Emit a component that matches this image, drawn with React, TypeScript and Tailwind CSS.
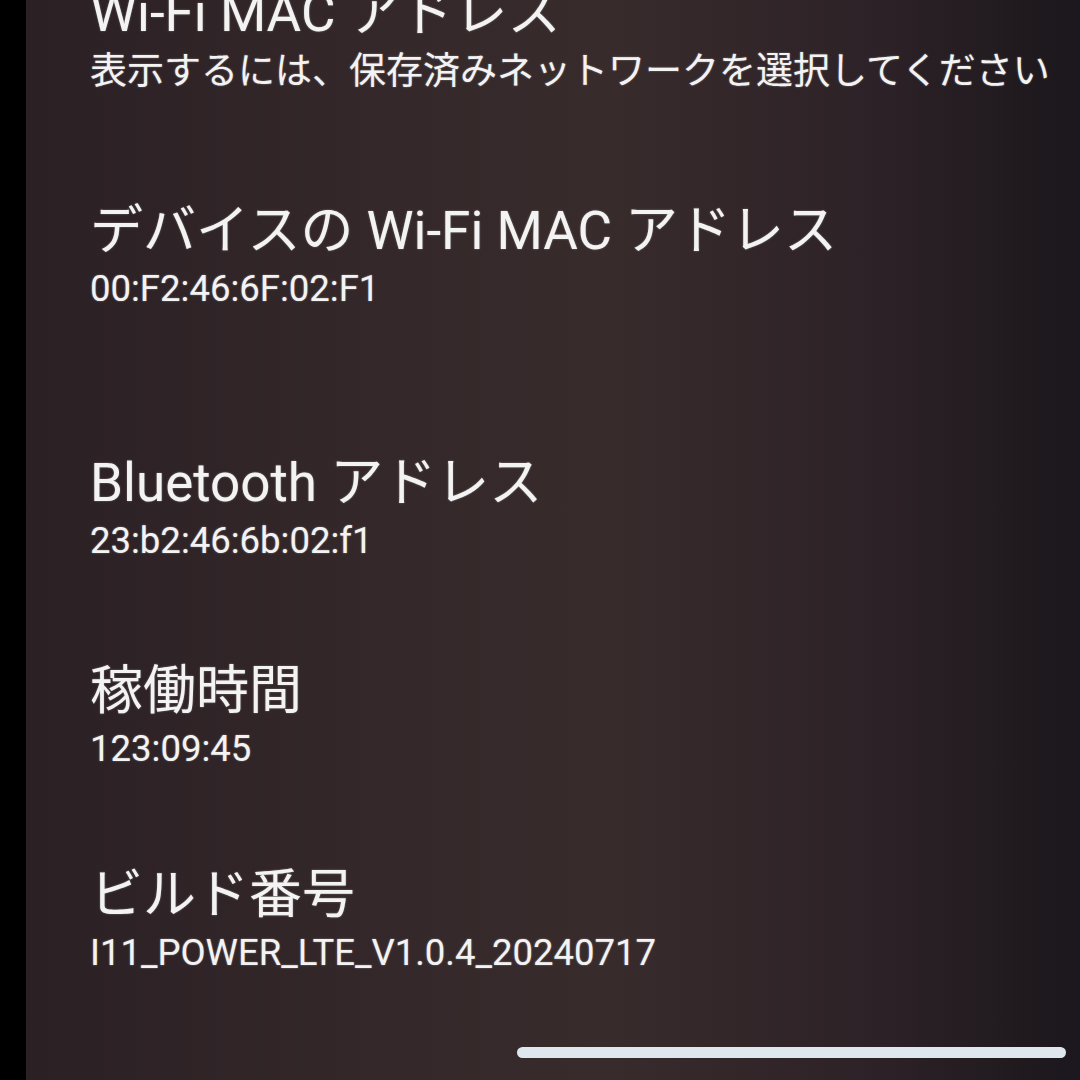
const items = [
  { title: "Wi-Fi MAC アドレス", value: "表示するには、保存済みネットワークを選択してください", top: "mt-[-18px]", cjkValue: true },
  { title: "デバイスの Wi-Fi MAC アドレス", value: "00:F2:46:6F:02:F1", top: "mt-[106px]" },
  { title: "Bluetooth アドレス", value: "23:b2:46:6b:02:f1", top: "mt-[141px]" },
  { title: "稼働時間", value: "123:09:45", top: "mt-[97px]" },
  { title: "ビルド番号", value: "I11_POWER_LTE_V1.0.4_20240717", top: "mt-[93px]" },
];

function InfoRow({
  title,
  value,
  top,
  cjkValue,
}: {
  title: string;
  value: string;
  top: string;
  cjkValue?: boolean;
}) {
  return (
    <div className={`flex flex-col ${top}`}>
      <div className="text-[53px] leading-[62px] whitespace-nowrap">{title}</div>
      <div
        className={
          cjkValue
            ? "mt-[6px] text-[37px] leading-[44px] whitespace-nowrap"
            : "mt-[5px] text-[36.5px] leading-[44px] whitespace-nowrap"
        }
      >
        {value}
      </div>
    </div>
  );
}

export default function App() {
  return (
    <div className="flex h-[1080px] w-[1080px] overflow-hidden bg-black font-['Roboto','Noto_Sans_CJK_JP',sans-serif] text-[#f3f3f3] [text-shadow:0_0_2px_rgba(255,255,255,0.4)]">
      {/* photo edge: phone bezel */}
      <div className="w-[26px] shrink-0 bg-black" />
      <div className="relative flex-1 bg-[linear-gradient(90deg,#2b2024_0%,#34282a_35%,#382b2c_55%,#2d2227_80%,#1b171c_100%)] pl-[64px]">
        <div className="flex flex-col">
          {items.map((it) => (
            <InfoRow key={it.title} {...it} />
          ))}
        </div>
        {/* gesture bar */}
        <div className="absolute left-[491px] top-[1047px] h-[11px] w-[549px] rounded-full bg-[#dfe7ee]" />
      </div>
    </div>
  );
}
